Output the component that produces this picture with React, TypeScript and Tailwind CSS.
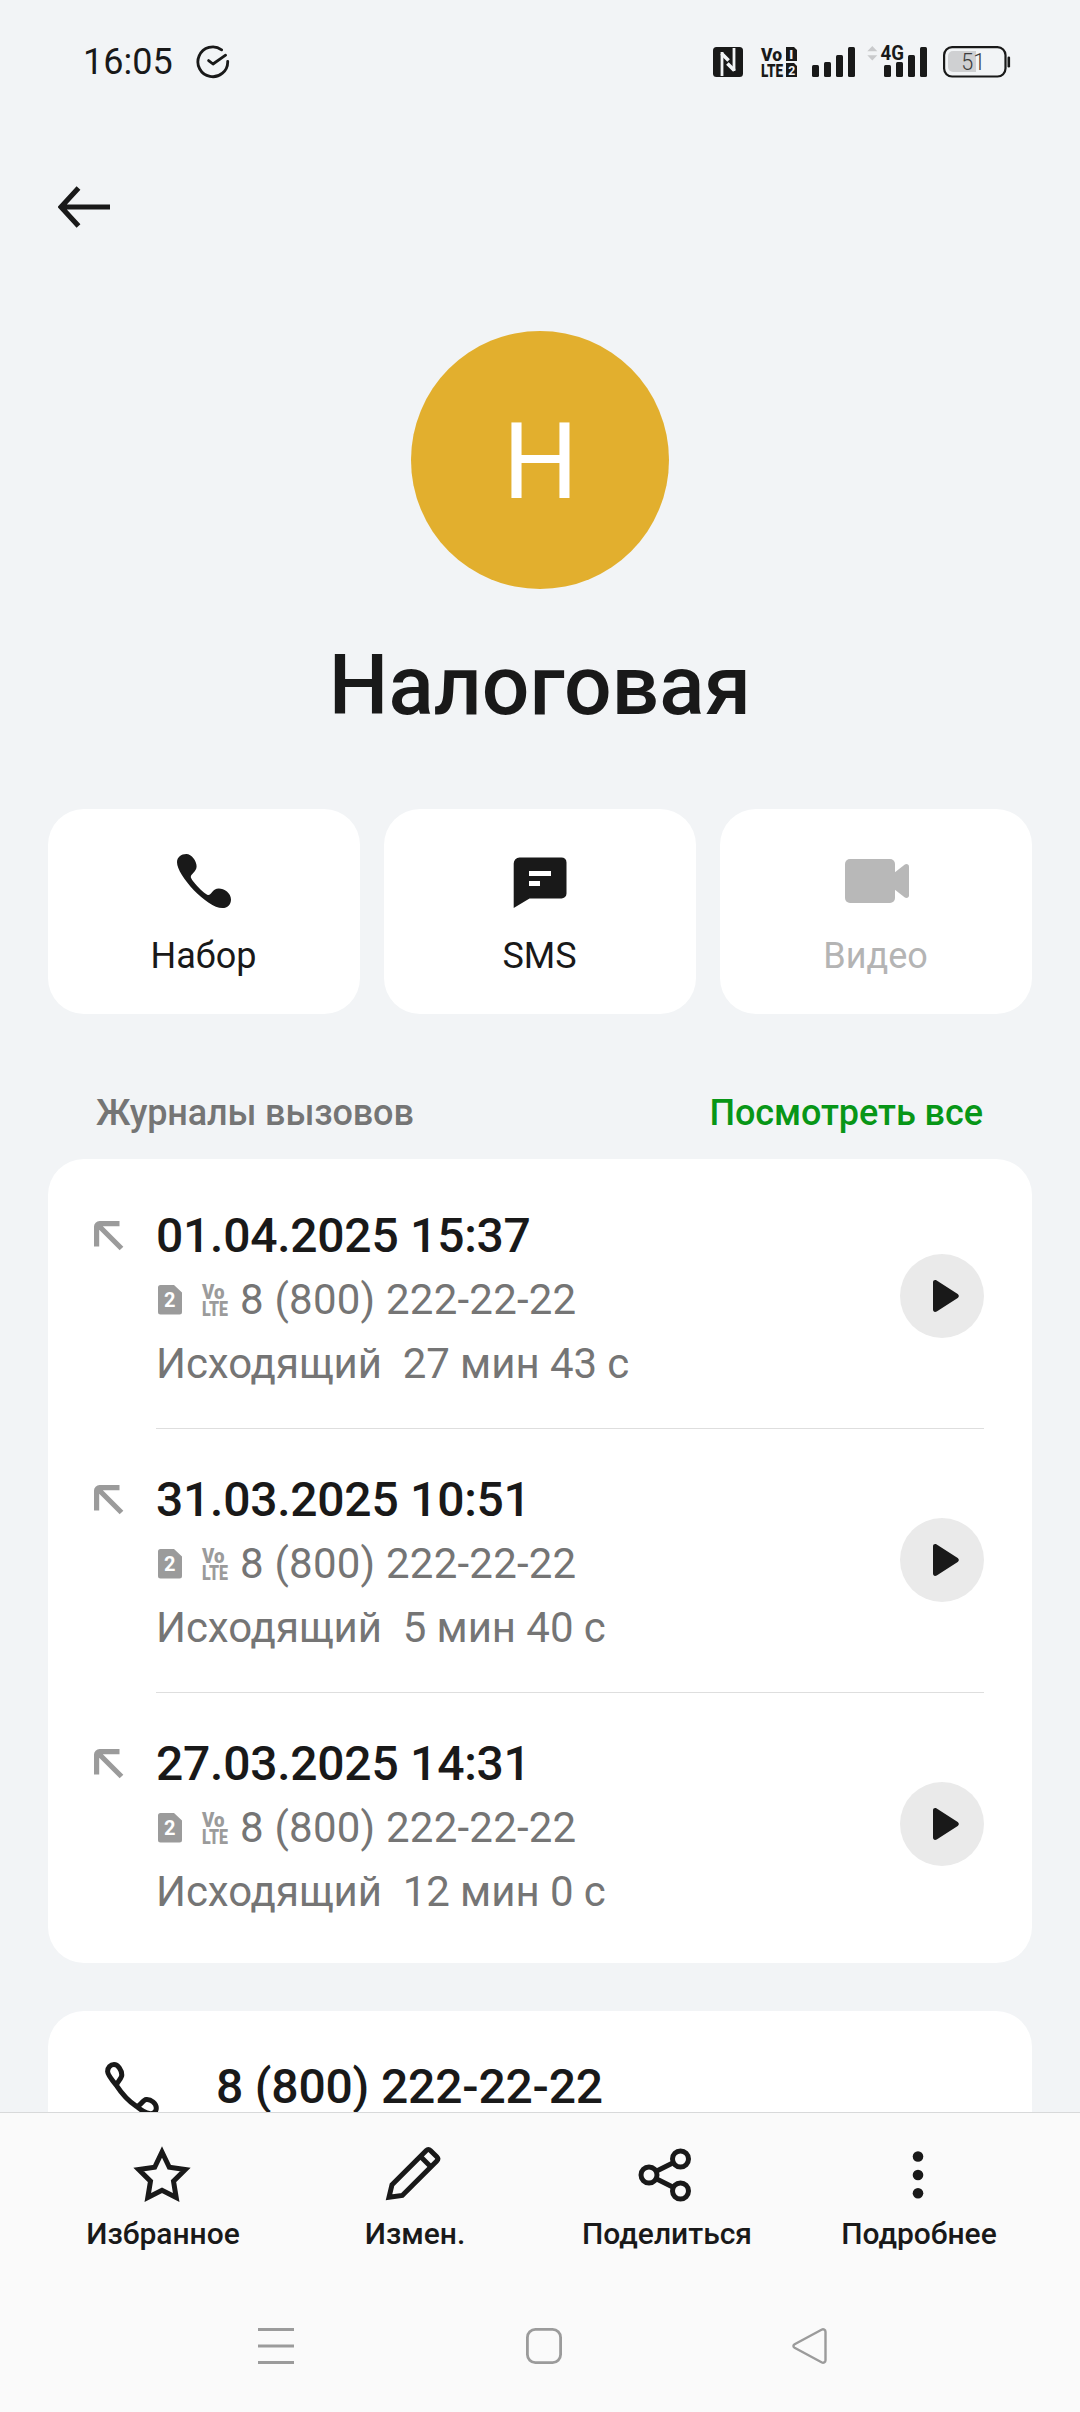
import React from "react";

const INK = "#191919";
const MUTED = "#9b9b9b";

function StatusBar() {
  return (
    <header className="flex h-[124px] items-center pl-[83px] pr-[69px]">
      <span className="text-[36px] leading-[42px]">16:05</span>
      <svg className="ml-[23px]" width="34" height="34" viewBox="0 0 34 34" fill="none" stroke={INK} strokeWidth="2.8" strokeLinecap="round" strokeLinejoin="round">
        <path d="M25.6 4.8A14.9 14.9 0 1 0 31.7 16.4" />
        <path d="M12.6 15.6l4.4 3.4 12.6-8.8" />
      </svg>
      <div className="ml-auto flex items-center">
        <svg width="30" height="32" viewBox="0 0 30 32" fill={INK}>
          <rect x="0" y="1" width="30" height="30" rx="3.5" />
          <path d="M9 30V6M21 2v23" fill="none" stroke="#f2f4f6" strokeWidth="2.8" />
          <path d="M8.600 7.500l7 7M21.400 24.500l-7-7" fill="none" stroke="#f2f4f6" strokeWidth="3.600" />
        </svg>
        <svg className="ml-[18px] overflow-visible" width="37" height="32" viewBox="0 0 37 32" fill={INK} fontFamily="Roboto, sans-serif" fontWeight="900">
          <text x="0" y="15" fontSize="19" textLength="21" lengthAdjust="spacingAndGlyphs">Vo</text>
          <text x="0" y="31" fontSize="19" textLength="22" lengthAdjust="spacingAndGlyphs">LTE</text>
          <path d="M25 1h8l3 3v11H25zM25 17h8l3 3v11H25z" />
          <text x="28" y="12.500" fontSize="13" fontWeight="700" textLength="4.500" lengthAdjust="spacingAndGlyphs" fill="#f2f4f6">I</text>
          <text x="27.200" y="28.800" fontSize="13.500" fontWeight="700" textLength="7" lengthAdjust="spacingAndGlyphs" fill="#f2f4f6">2</text>
        </svg>
        <svg className="ml-[14px]" width="43" height="32" viewBox="0 0 43 32" fill={INK}>
          <rect x="0" y="19" width="7" height="12" rx="1.5" />
          <rect x="12" y="16" width="7" height="15" rx="1.5" />
          <rect x="24" y="9" width="7" height="22" rx="1.5" />
          <rect x="36" y="1" width="7" height="30" rx="1.5" />
        </svg>
        <svg className="ml-[12px] overflow-visible" width="60" height="32" viewBox="0 0 60 32" fill={INK}>
          <path d="M0.3 5.2L5.3 0l5 5.2zM0.3 9.3h10L5.3 14.500z" fill="#c9cacc" />
          <rect x="17" y="19" width="7" height="12" rx="1.5" />
          <rect x="29" y="16" width="7" height="15" rx="1.5" />
          <rect x="41" y="9" width="7" height="22" rx="1.5" />
          <rect x="53" y="1" width="7" height="30" rx="1.5" />
          <text x="13.500" y="14.300" fontSize="21" fontWeight="700" fontFamily="Roboto, sans-serif" textLength="23.500" lengthAdjust="spacingAndGlyphs">4G</text>
        </svg>
        <svg className="ml-[16px]" width="68" height="32" viewBox="0 0 68 32">
          <rect x="1.1" y="1.1" width="61.4" height="29.4" rx="8" fill="none" stroke={INK} strokeWidth="2.2" />
          <path d="M10 5h23v21H10a5 5 0 0 1-5-5V10a5 5 0 0 1 5-5z" fill="#cfd0d2" />
          <rect x="64.5" y="10.5" width="2.6" height="11" rx="1.2" fill={INK} />
          <text x="18.3" y="23.9" fontSize="23" fontWeight="300" fontFamily="Roboto, sans-serif" fill="#3d3d3d" textLength="24" lengthAdjust="spacingAndGlyphs">51</text>
        </svg>
      </div>
    </header>
  );
}

const PHONE_PATH =
  "M0 8.2C0 3.3 4.2 0 9.3 0c5.4 0 10.3 7 10.3 12.3 0 5.6-5.8 7.5-5.8 10.7 0 3 13.3 17.3 17.3 17.9 3.3.4 4.3-6.5 10.7-6.5 5.4 0 12.2 4.6 12.2 11 0 5-3.4 8.6-8.6 8.6C30 54 0 21.500 0 8.200z";

function PhoneFilled() {
  return (
    <svg width="54" height="54" viewBox="0 0 54 54" fill={INK}>
      <path d={PHONE_PATH} />
    </svg>
  );
}

function PhoneOutline() {
  return (
    <svg width="54" height="56" viewBox="0 0 54 56" fill="none" stroke={INK} strokeWidth="5" strokeLinejoin="round">
      <path d="M2.600 9.500C2.600 5.500 5.500 2.600 9 2.600c4 0 7.800 5.500 7.800 10.400 0 3.600-5 6.800-5.400 10.400C6.500 17.500 2.600 12.500 2.600 9.500zM11.400 23.400C16 30.500 24 39.500 31.500 44.400M31.500 44.400c4-.400 6-6.400 9.800-6.800 4.600-.4 10 3.600 10 8.400 0 4-3.300 6-6.700 5.600-4.300-.4-8.600-3.600-13.100-7.200z" />
    </svg>
  );
}

function SmsIcon() {
  return (
    <svg width="54" height="54" viewBox="0 0 54 54" fill={INK}>
      <path d="M6.500 3.400h42a5 5 0 0 1 5 5v31a5 5 0 0 1-5 5h-32L.700 54V9.400a6 6 0 0 1 5.800-6z" />
      <path d="M16 17h22v5H16zM16 27h11v5H16z" fill="#fff" />
    </svg>
  );
}

function VideoIcon() {
  return (
    <svg width="66" height="54" viewBox="0 0 66 54" fill="#b8b8b8">
      <rect x="2" y="5" width="50" height="44" rx="5" />
      <path d="M51 19l10.500-8.300c2-1.500 4.500-.5 4.500 2v28.600c0 2.500-2.500 3.500-4.500 2L51 35z" />
    </svg>
  );
}

function ActionCard({ icon, label, disabled = false }: { icon: React.ReactNode; label: string; disabled?: boolean }) {
  return (
    <button className="flex h-[205px] flex-1 flex-col items-center rounded-[36px] bg-white pt-[45px]">
      {icon}
      <span className={disabled ? "mt-[27px] pr-px text-[36px] leading-[42px] text-[#b4b4b4]" : "mt-[27px] pr-px text-[36px] leading-[42px]"}>
        {label}
      </span>
    </button>
  );
}

function SimBadge() {
  return (
    <svg width="24" height="30" viewBox="0 0 24 30">
      <path d="M2.500 0H16l8 7.500V27a2.500 2.500 0 0 1-2.500 2.500h-19A2.500 2.500 0 0 1 0 27V2.500A2.500 2.500 0 0 1 2.500 0z" fill={MUTED} />
      <text x="6" y="22.200" fontSize="20" fontWeight="700" fontFamily="Roboto, sans-serif" fill="#fff">2</text>
    </svg>
  );
}

function VolteBadge() {
  return (
    <svg className="overflow-visible" width="26" height="32" viewBox="0 0 26 32" fill={MUTED} fontFamily="Roboto, sans-serif" fontWeight="900">
      <text x="0" y="14" fontSize="20" textLength="22.500" lengthAdjust="spacingAndGlyphs">Vo</text>
      <text x="0" y="31" fontSize="21" textLength="26" lengthAdjust="spacingAndGlyphs">LTE</text>
    </svg>
  );
}

type Call = { date: string; duration: string };

const CALLS: Call[] = [
  { date: "01.04.2025 15:37", duration: "27 мин 43 с" },
  { date: "31.03.2025 10:51", duration: "5 мин 40 с" },
  { date: "27.03.2025 14:31", duration: "12 мин 0 с" },
];

function CallRow({ call, last }: { call: Call; last: boolean }) {
  return (
    <li className="flex h-[264px] pl-[46px] pr-[48px]">
      <svg className="mt-[56px] shrink-0" width="30" height="30" viewBox="0 0 30 30" fill="none" stroke={MUTED} strokeWidth="5.200">
        <path d="M2.600 25.500V5.600a3 3 0 0 1 3-3H25.500M4 4l23.500 23.500" />
      </svg>
      <div className={last ? "ml-[32px] flex flex-1 items-center" : "ml-[32px] flex flex-1 items-center border-b border-[#dedede]"}>
        <div className="flex-1 pt-[6px]">
          <div className="text-[48px] leading-[64px] font-medium tracking-[-0.25px]">{call.date}</div>
          <div className="flex h-[64px] items-center text-[42px] leading-[64px] text-[#757575]">
            <span className="ml-[2px] flex"><SimBadge /></span>
            <span className="ml-[20px] mt-[2px] flex"><VolteBadge /></span>
            <span className="ml-[12px] tracking-[0.22px]">8 (800) 222-22-22</span>
          </div>
          <div className="text-[42px] leading-[64px] tracking-[-0.06px] whitespace-pre text-[#757575]">{"Исходящий  " + call.duration}</div>
        </div>
        <button className="-mt-[2px] flex size-[84px] items-center justify-center rounded-full bg-[#eaeaea]">
          <svg className="ml-[8px]" width="26" height="32" viewBox="0 0 26 32" fill={INK}>
            <path d="M0 2.500C0 .300 2 -.500 3.700.600l21 13.500c1.500 1 1.500 2.800 0 3.800l-21 13.500C2 32.500 0 31.700 0 29.500z" />
          </svg>
        </button>
      </div>
    </li>
  );
}

function BottomItem({ icon, label }: { icon: React.ReactNode; label: string }) {
  return (
    <button className="flex w-[252px] flex-col items-center">
      <svg width="64" height="64" viewBox="0 0 64 64" fill="none" stroke={INK} strokeWidth="5">
        {icon}
      </svg>
      <span className="mt-[9px] pl-[2px] text-[30px] leading-[36px] font-medium">{label}</span>
    </button>
  );
}

export default function App() {
  return (
    <div className="flex h-[2412px] w-[1080px] flex-col overflow-hidden bg-[#f2f4f6] font-[Roboto,sans-serif] text-[#191919]">
      <StatusBar />
      <nav className="flex h-[166px] items-center pl-[58px]">
        <svg width="52" height="42" viewBox="0 0 52 42" fill="none" stroke={INK} strokeWidth="5.200">
          <path d="M52 21H4M20.500 2L3 21l17.500 19" />
        </svg>
      </nav>

      <main className="flex min-h-0 flex-1 flex-col overflow-hidden px-[48px] pt-[41px]">
        <div className="flex size-[258px] shrink-0 items-center justify-center self-center rounded-full bg-[#e2af2e] pt-[4px] pl-px text-[106px] leading-none text-white">
          Н
        </div>
        <h1 className="mt-[48px] shrink-0 text-center text-[84px] leading-[98px] font-medium">Налоговая</h1>

        <div className="mt-[74px] flex shrink-0 gap-6">
          <ActionCard icon={<PhoneFilled />} label="Набор" />
          <ActionCard icon={<SmsIcon />} label="SMS" />
          <ActionCard icon={<VideoIcon />} label="Видео" disabled />
        </div>

        <div className="mt-[78px] flex h-[42px] shrink-0 items-center justify-between px-[48px] text-[36px] leading-[42px] font-medium tracking-[-0.14px]">
          <h2 className="text-[#757575]">Журналы вызовов</h2>
          <a className="pr-px tracking-[-0.05px] text-[#089617]">Посмотреть все</a>
        </div>

        <ul className="mt-[25px] shrink-0 rounded-[36px] bg-white py-[6px]">
          {CALLS.map((call, i) => (
            <CallRow key={call.date} call={call} last={i === CALLS.length - 1} />
          ))}
        </ul>

        <section className="mt-[48px] flex h-[180px] shrink-0 items-start rounded-t-[36px] bg-white pl-[57px]">
          <span className="mt-[51px]"><PhoneOutline /></span>
          <span className="ml-[57px] mt-[48px] text-[48px] leading-[56px] font-medium tracking-[-0.18px]">8 (800) 222-22-22</span>
        </section>
      </main>

      <footer className="h-[300px] shrink-0 border-t border-[#d8d9da] bg-[#fafafa]">
        <div className="flex px-[36px] pt-[30px]">
          <BottomItem
            label="Избранное"
            icon={<path d="M32 9l7.300 15.300 16 2.200-11.800 11.700 2.700 16.300-14.200-7.300-14.200 7.300 2.700-16.300L8.700 26.500l16-2.200z" />}
          />
          <BottomItem
            label="Измен."
            icon={
              <>
                <path d="M10 41.700L44.300 7.400c1.300-1.300 2.800-1.300 4.100 0l6.400 6.400c1.300 1.300 1.300 2.800 0 4.100L20.300 52.400 7 54.200z" />
                <path d="M38.500 13.500l10.500 10.500" />
              </>
            }
          />
          <BottomItem
            label="Поделиться"
            icon={
              <>
                <circle cx="15" cy="32" r="8" />
                <circle cx="46.500" cy="16" r="8" />
                <circle cx="46.500" cy="48" r="8" />
                <path d="M22.200 28.300l17-8.600M22.200 35.700l17 8.600" />
              </>
            }
          />
          <BottomItem
            label="Подробнее"
            icon={
              <g fill={INK} stroke="none">
                <circle cx="32" cy="13.500" r="5.300" />
                <circle cx="32" cy="32" r="5.300" />
                <circle cx="32" cy="50.300" r="5.300" />
              </g>
            }
          />
        </div>
        <div className="mt-[76px] flex pl-[258px]">
          <svg width="36" height="36" viewBox="0 0 36 36" stroke={MUTED} strokeWidth="3">
            <path d="M0 1.500h36M0 18h36M0 34.500h36" />
          </svg>
          <svg className="ml-[232px]" width="36" height="36" viewBox="0 0 36 36" fill="none" stroke={MUTED} strokeWidth="2.800">
            <rect x="1.400" y="1.400" width="33.200" height="33.200" rx="8" />
          </svg>
          <svg className="ml-[230px]" width="36" height="36" viewBox="0 0 36 36" fill="none" stroke={MUTED} strokeWidth="2.400">
            <path d="M2.600 16.200L29.500 1.700c2-1 4 0 4 2v28.600c0 2-2 3-4 2L2.600 19.800c-1.600-1-1.600-2.600 0-3.600z" />
          </svg>
        </div>
      </footer>
    </div>
  );
}
